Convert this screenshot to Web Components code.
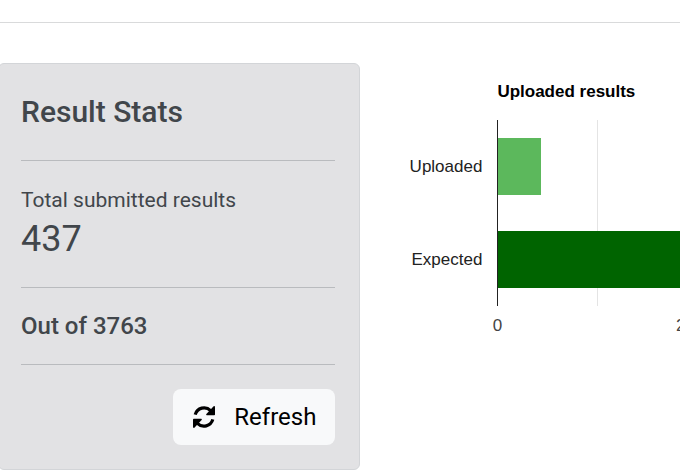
<!DOCTYPE html>
<html lang="en">
<head>
<meta charset="utf-8">
<title>Result Stats</title>
<style>
body { margin: 0; background: #fff; font-family: Roboto, sans-serif; }
</style>
</head>
<body>
<results-page>
  <stats-card slot="stats" heading="Result Stats">
    <stat-total label="Total submitted results">437</stat-total>
    <stat-goal>Out of 3763</stat-goal>
    <refresh-button slot="action">Refresh</refresh-button>
  </stats-card>
  <results-chart slot="chart" heading="Uploaded results">
    <chart-bar label="Uploaded" value="437" color="#5cb85c"></chart-bar>
    <chart-bar label="Expected" value="3763" color="#006400"></chart-bar>
  </results-chart>
</results-page>
<script>
const define = (name, render) => customElements.define(name, class extends HTMLElement {
  connectedCallback() {
    if (this.shadowRoot) return;
    this.attachShadow({ mode: "open" }).innerHTML = render(this);
  }
});

define("results-page", () => `
  <style>
    :host { display: block; overflow: hidden; }
    header { height: 22px; border-bottom: 1px solid #d9dadb; }
    main { display: grid; grid-template-columns: 53% minmax(0, 1fr); align-items: start; padding-top: 40px; }
  </style>
  <header></header>
  <main><slot name="stats"></slot><slot name="chart"></slot></main>`);

define("stats-card", el => `
  <style>
    :host { display: block; box-sizing: border-box; margin-left: -2px; padding: 24px; padding-left: 22px;
      background: #e2e2e4; color: #41464b; border: 1px solid #d3d5d8; border-radius: 6px; }
    h2 { margin: 0; font-size: 30px; line-height: 48px; font-weight: 500; padding-bottom: 24px; }
    ::slotted(:not([slot])) { border-top: 1px solid #b9bbbe; }
    footer { display: flex; justify-content: flex-end; border-top: 1px solid #b9bbbe; padding-top: 24px; }
  </style>
  <h2>${el.getAttribute("heading")}</h2>
  <slot></slot>
  <footer><slot name="action"></slot></footer>`);

define("stat-total", el => `
  <style>
    :host { display: block; padding: 24px 0; }
    div { font-size: 21px; line-height: 30px; }
    strong { display: block; font-size: 36px; line-height: 48px; font-weight: 400; }
  </style>
  <div>${el.getAttribute("label")}</div>
  <strong><slot></slot></strong>`);

define("stat-goal", () => `
  <style>
    :host { display: block; padding: 24px 0; font-size: 24px; line-height: 28px; font-weight: 500; }
  </style>
  <slot></slot>`);

define("refresh-button", () => `
  <style>
    :host { display: block; }
    button { display: flex; align-items: center; gap: 18px; height: 56px; padding: 0 19px; border: 0; border-radius: 8px;
      background: #f8f9fa; color: #000; font: 400 24px/36px Roboto, sans-serif; }
    svg { display: block; width: 24px; height: 24px; }
  </style>
  <button type="button">
    <svg viewBox="0 0 24 24" aria-hidden="true">
      <path d="M3.2 9.6A9.2 9.2 0 0 1 18.6 5.6" fill="none" stroke="#000" stroke-width="3.2"/>
      <path d="M21.6 1.2Q23 .6 23 2.2V9.4Q23 10.2 22.2 10.2H15Q13.4 10.2 14.4 9Z" fill="#000"/>
      <path d="M20.8 14.4A9.2 9.2 0 0 1 5.4 18.4" fill="none" stroke="#000" stroke-width="3.2"/>
      <path d="M2.4 22.8Q1 23.4 1 21.8V14.6Q1 13.8 1.8 13.8H9Q10.6 13.8 9.6 15Z" fill="#000"/>
    </svg>
    <span><slot></slot></span>
  </button>`);

define("results-chart", el => `
  <style>
    :host { --axis-width: 400px; --label-width: 122px; --gap: 15px; display: block; padding-top: 17px;
      font-family: "Liberation Sans", Arial, sans-serif; font-size: 17px; line-height: 24px; color: #222; }
    h3 { margin: 0 0 16px; padding-left: calc(var(--label-width) + var(--gap)); font-size: 17px; line-height: 24px; color: #000; }
    .area { display: grid; grid-template-columns: var(--label-width) var(--axis-width); column-gap: var(--gap); }
    .grid { grid-area: 1 / 2; display: grid; grid-template-columns: repeat(4, 1fr); border-left: 1px solid #222; }
    .grid i { border-right: 1px solid #e4e4e4; }
    .bars { grid-area: 1 / 1 / 2 / 3; display: grid; gap: 36px; padding: 18px 0; }
    .ticks { grid-area: 2 / 2; display: grid; grid-template-columns: repeat(3, calc(var(--axis-width) / 2));
      margin-left: calc(var(--axis-width) / -4); padding-top: 8px; text-align: center; color: #444; }
  </style>
  <h3>${el.getAttribute("heading")}</h3>
  <div class="area">
    <div class="grid"><i></i><i></i><i></i><i></i></div>
    <div class="bars"><slot></slot></div>
    <div class="ticks"><span>0</span><span>2,000</span><span>4,000</span></div>
  </div>`);

define("chart-bar", el => `
  <style>
    :host { display: grid; grid-template-columns: var(--label-width) var(--axis-width); column-gap: var(--gap); align-items: center; }
    span { text-align: right; }
    .bar { box-sizing: border-box; height: 57px; width: ${el.getAttribute("value") / 40}%;
      background: ${el.getAttribute("color")}; border-left: 1px solid #222; }
  </style>
  <span>${el.getAttribute("label")}</span>
  <div class="track"><div class="bar"></div></div>`);
</script>
</body>
</html>
